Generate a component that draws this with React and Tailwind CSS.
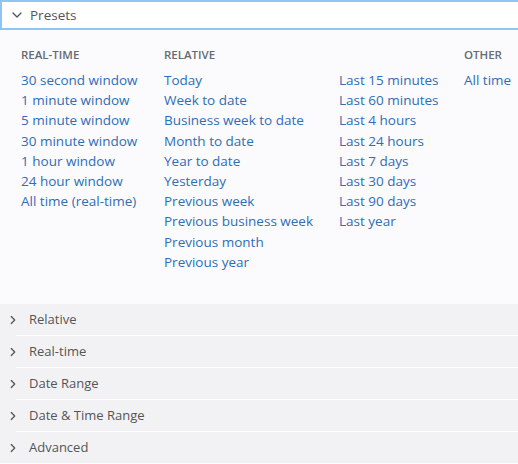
import { ChevronDown, ChevronRight } from "lucide-react";

const columns = [
  {
    title: "Real-time",
    items: [
      "30 second window",
      "1 minute window",
      "5 minute window",
      "30 minute window",
      "1 hour window",
      "24 hour window",
      "All time (real-time)",
    ],
  },
  {
    title: "Relative",
    items: [
      "Today",
      "Week to date",
      "Business week to date",
      "Month to date",
      "Year to date",
      "Yesterday",
      "Previous week",
      "Previous business week",
      "Previous month",
      "Previous year",
    ],
  },
  {
    title: "",
    items: [
      "Last 15 minutes",
      "Last 60 minutes",
      "Last 4 hours",
      "Last 24 hours",
      "Last 7 days",
      "Last 30 days",
      "Last 90 days",
      "Last year",
    ],
  },
  { title: "Other", items: ["All time"] },
];

const sections = ["Relative", "Real-time", "Date Range", "Date & Time Range", "Advanced"];

const colWidths = ["w-[143px]", "w-[175px]", "w-[125px]", "flex-1"];

export default function App() {
  return (
    <div className="w-[518px] h-[464px] overflow-hidden bg-[#fbfbfd] font-['Open_Sans',sans-serif]">
      <div className="flex items-center h-[30px] border-2 border-r-0 border-[#8cc6f6] bg-white pl-[7px]">
        <ChevronDown className="w-[16px] h-[16px] text-[#555]" strokeWidth={2} />
        <span className="ml-[5px] text-[13.5px] text-[#555]">Presets</span>
      </div>

      <div className="flex pl-[21px] pt-[16px] h-[274px]">
        {columns.map((col, i) => (
          <div key={i} className={colWidths[i]}>
            <div className="h-[18px] text-[11.5px] font-semibold uppercase text-[#666a72] leading-[18px]">
              {col.title}
            </div>
            <ul className="mt-[6px]">
              {col.items.map((item) => (
                <li
                  key={item}
                  className="text-[13.5px] leading-[20.2px] text-[#2f6db6] whitespace-nowrap"
                >
                  {item}
                </li>
              ))}
            </ul>
          </div>
        ))}
      </div>

      <div className="bg-[#f2f2f5]">
        {sections.map((s, i) => (
          <div key={s}>
            {i > 0 && <div className="ml-[16px] h-px bg-white" />}
            <div className="flex items-center h-[31px] pl-[6px]">
              <ChevronRight className="w-[14px] h-[14px] text-[#555]" strokeWidth={2.2} />
              <span className="ml-[9px] text-[13px] text-[#555]">{s}</span>
            </div>
          </div>
        ))}
      </div>
    </div>
  );
}
